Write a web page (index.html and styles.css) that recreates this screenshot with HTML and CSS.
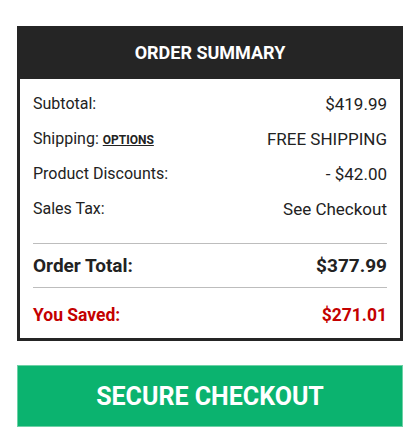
FILE: index.html
```html
<!DOCTYPE html>
<html lang="en">
<head>
    <meta charset="UTF-8">
    <meta name="viewport" content="width=device-width, initial-scale=1.0">
    <title>Order Summary</title>
    <link rel="stylesheet" href="styles.css">
</head>
<body>
    <div class="wrap">
        <!-- Summary card -->
        <div class="summary">
            <div class="summary-head">ORDER SUMMARY</div>
            <div class="summary-body">
                <div class="row">
                    <span class="label">Subtotal:</span>
                    <span class="value">$419.99</span>
                </div>
                <div class="row">
                    <span class="label">Shipping: <a href="#" class="options">OPTIONS</a></span>
                    <span class="value">FREE SHIPPING</span>
                </div>
                <div class="row">
                    <span class="label">Product Discounts:</span>
                    <span class="value">- $42.00</span>
                </div>
                <div class="row">
                    <span class="label">Sales Tax:</span>
                    <span class="value">See Checkout</span>
                </div>

                <div class="row total">
                    <span>Order Total:</span>
                    <span>$377.99</span>
                </div>
                <div class="row saved">
                    <span>You Saved:</span>
                    <span>$271.01</span>
                </div>
            </div>
        </div>

        <button class="checkout">SECURE CHECKOUT</button>
    </div>
</body>
</html>
```

FILE: styles.css
```css
/* Global */
* {
    margin: 0;
    padding: 0;
    box-sizing: border-box;
}
body {
    font-family: Roboto, 'Liberation Sans', sans-serif;
    background: #fff;
    color: #222;
}

.wrap {
    padding: 26px 16px 0 17px;
}

/* Summary card */
.summary {
    border: 3px solid #252525;
}
.summary-head {
    background: #252525;
    color: #fff;
    font-size: 18px;
    font-weight: 700;
    text-align: center;
    height: 50px;
    line-height: 47px;
}
.summary-body {
    padding: 7px 13px 3px;
}

.row {
    display: flex;
    justify-content: space-between;
    align-items: center;
    height: 35px;
}
.label {
    font-size: 16px;
}
.value {
    font-size: 17px;
}
.options {
    color: #222;
    font-size: 12px;
    font-weight: 700;
    text-decoration: underline;
}

.total {
    margin-top: 17px;
    border-top: 1px solid #bdbdbd;
    border-bottom: 1px solid #bdbdbd;
    height: 45px;
    font-size: 19px;
    font-weight: 700;
}
.saved {
    height: 47px;
    padding-top: 6px;
    font-size: 17.5px;
    font-weight: 700;
    color: #c40000;
}

/* Button */
.checkout {
    display: block;
    width: 100%;
    height: 62px;
    margin-top: 24px;
    background: #0bb36f;
    border: 1px solid #6dd1a6;
    color: #fff;
    font-family: Roboto, 'Liberation Sans', sans-serif;
    font-size: 25px;
    font-weight: 700;
    cursor: pointer;
}
```
